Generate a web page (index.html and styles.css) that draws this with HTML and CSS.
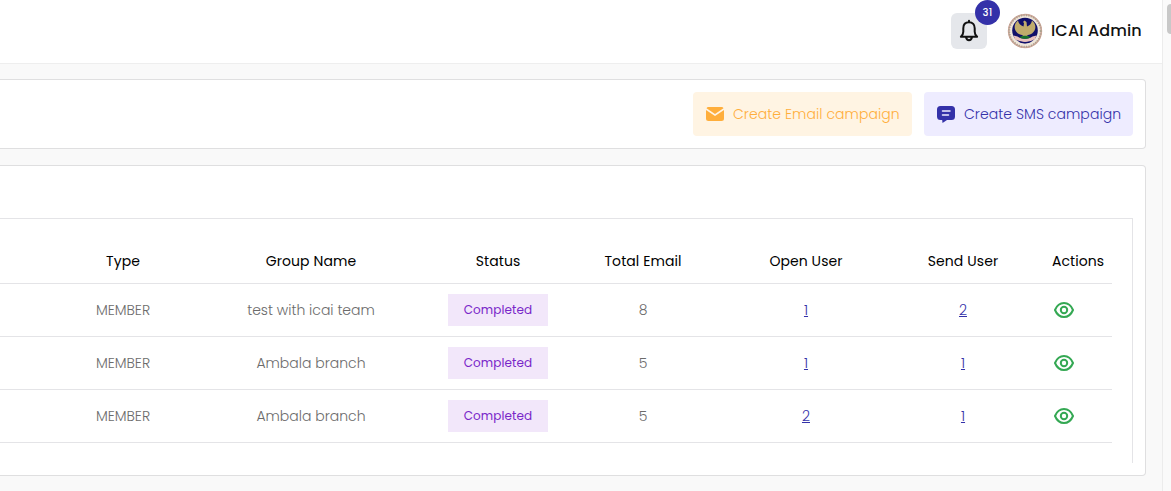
FILE: index.html
```
<!DOCTYPE html>
<html lang="en">
<head>
<meta charset="utf-8">
<title>Campaigns</title>
<link rel="stylesheet" href="styles.css">
</head>
<body>
<svg class="defs" aria-hidden="true">
  <symbol id="eye" viewBox="0 0 20 16"><path d="M1 8C3 3.200 6.200 1 10 1s7 2.200 9 7c-2 4.800-5.200 7-9 7S3 12.800 1 8Z"/><circle cx="10" cy="8" r="3.200"/></symbol>
</svg>
<div class="app">
  <div class="page">
    <header class="topbar">
      <button class="bell" aria-label="Notifications">
        <svg width="20" height="24" viewBox="0 0 20 24"><path d="M10 1.800v1.400M10 3.200c-3.700 0-5.700 2.600-5.700 6v3.500c0 2-.8 3.500-2.400 5.100h16.200c-1.600-1.600-2.400-3.100-2.400-5.100V9.200c0-3.400-2-6-5.700-6ZM7 18.300c.4 1.900 1.500 2.900 3 2.900s2.600-1 3-2.900"/></svg>
        <span class="count">31</span>
      </button>
      <svg class="avatar" width="36" height="36" viewBox="0 0 36 36">
        <circle cx="18" cy="18" r="17" fill="#efe6da"/>
        <circle cx="18" cy="18" r="16.300" fill="none" stroke="#cfa79b" stroke-width="1.800"/>
        <circle cx="18" cy="18" r="15.800" fill="none" stroke="#a8a18c" stroke-width="2" stroke-dasharray="1 1.500"/>
        <circle cx="18" cy="17.500" r="12.800" fill="#10106a"/>
        <path d="M11 7.500C6.500 11 6.500 17 11 20.500c2 1.300 4 1.700 5 1.700l-2 2.300h8l-2-2.300c1 0 3-.4 5-1.700 4.500-3.500 4.500-9.500 0-13-.5 3-2 5-5 6l-.5-4.500-2-1.500-1.500 1.500 1 1-.5 3.500c-3-1-5-3-5.500-6Z" fill="#c0ac6c"/>
        <path d="m6.500 22.500 4 1c4 3 11 3 15 0l4-1-1.500 3.500c-6 4-14 4-20 0Z" fill="#e9c2bd"/>
        <path d="M12.500 24.200c3-2 8-2 11 0-3 2.200-8 2.200-11 0Z" fill="#16712b"/>
        <path d="M11 28.200c4 1 10 1 14 0-4 3-10 3-14 0Z" fill="#10106a"/>
      </svg>
      <span class="user">ICAI Admin</span>
    </header>
    <main class="content">
      <section class="card toolbar">
        <button class="btn email">
          <svg width="18" height="14" viewBox="0 0 18 14"><path fill="currentColor" d="M2.500 0h13Q17 0 17.500 1.200L9 7 .5 1.200Q1 0 2.500 0ZM0 3l9 6 9-6v8.500q0 2.500-2.500 2.500h-13Q0 14 0 11.500Z"/></svg>
          <span>Create Email campaign</span>
        </button>
        <button class="btn sms">
          <svg width="18" height="17" viewBox="0 0 18 17"><path fill="currentColor" d="M3.500 0h11Q18 0 18 3.500v7q0 3.500-3.500 3.500H10l-4.500 3-.3-3H3.500Q0 14 0 10.500v-7Q0 0 3.500 0Z"/><path d="M5.500 5h7.500M5.500 9h6" stroke="#eeecff" stroke-width="1.500" stroke-linecap="round"/></svg>
          <span>Create SMS campaign</span>
        </button>
      </section>
      <section class="card listing">
        <div class="frame">
          <div class="row head">
            <span>Type</span><span>Group Name</span><span>Status</span><span>Total Email</span><span>Open User</span><span>Send User</span><span class="action">Actions</span>
          </div>
          <div class="row">
            <span>MEMBER</span><span>test with icai team</span><span><b class="badge">Completed</b></span><span>8</span><a href="#">1</a><a href="#">2</a><span class="action"><svg class="eye"><use href="#eye"/></svg></span>
          </div>
          <div class="row">
            <span>MEMBER</span><span>Ambala branch</span><span><b class="badge">Completed</b></span><span>5</span><a href="#">1</a><a href="#">1</a><span class="action"><svg class="eye"><use href="#eye"/></svg></span>
          </div>
          <div class="row">
            <span>MEMBER</span><span>Ambala branch</span><span><b class="badge">Completed</b></span><span>5</span><a href="#">2</a><a href="#">1</a><span class="action"><svg class="eye"><use href="#eye"/></svg></span>
          </div>
        </div>
      </section>
    </main>
  </div>
  <div class="scrollbar"><div class="thumb"></div></div>
</div>
</body>
</html>
```
FILE: styles.css
```
* { box-sizing: border-box; }
body { margin: 0; background: #f9f9f9; font: 300 14px/20px Poppins, Inter, "Liberation Sans", sans-serif; color: #6b6b6b; overflow: hidden; }
button { font: inherit; border: 0; }
.defs { display: none; }
.app { display: flex; width: 1171px; height: 491px; }
.page { width: 1163px; border-right: 1px solid #ececec; }
.topbar { height: 64px; background: #fff; border-bottom: 1px solid #eee; display: flex; align-items: center; justify-content: flex-end; padding: 0 20px 1px 0; }
.bell { position: relative; width: 36px; height: 36px; border-radius: 6px; background: #e5e7eb; display: flex; align-items: center; justify-content: center; padding: 0; margin-right: 20px; }
.bell svg { fill: none; stroke: #111; stroke-width: 2; stroke-linejoin: round; stroke-linecap: round; }
.count { position: absolute; left: 24px; top: -13px; width: 25px; height: 25px; border-radius: 50%; background: #3431a9; color: #fff; font-size: 10px; font-weight: 500; line-height: 25px; text-align: center; letter-spacing: .2px; }
.avatar { margin-right: 8px; }
.user { color: #111; font-size: 16px; font-weight: 500; width: 91px; white-space: nowrap; letter-spacing: .15px; }
.content { padding-top: 15px; }
.card { width: 1146px; background: #fff; border: 1px solid #dfdfe0; border-left: 0; border-radius: 0 4px 4px 0; }
.toolbar { height: 70px; display: flex; align-items: center; justify-content: flex-end; gap: 12px; padding-right: 12px; }
.btn { height: 44px; border-radius: 4px; display: flex; align-items: center; gap: 9px; padding: 0 0 0 13px; white-space: nowrap; text-align: left; letter-spacing: .06px; }
.email { width: 219px; background: #fff4e3; color: #ffae3b; }
.sms { width: 209px; background: #eeecff; color: #3431a9; }
.listing { height: 311px; margin-top: 16px; padding: 52px 12px 12px 0; }
.frame { height: 245px; border: 1px solid #e4e4e7; border-width: 1px 1px 0 0; padding: 20px 20px 0 0; }
.row { height: 53px; display: grid; grid-template-columns: 118px 258px 116px 174px 152px 162px 68px; padding-left: 64px; align-items: center; text-align: center; border-bottom: 1px solid #e4e4e7; }
.head { height: 45px; color: #000; font-weight: 400; letter-spacing: .08px; }
.row .action { text-align: left; padding-left: 8px; }
.row a { color: #3431a9; }
.badge { display: block; width: 100px; height: 32px; margin: 0 auto; background: #f2e7fa; color: #7926c9; font-size: 12px; font-weight: 400; line-height: 32px; letter-spacing: .1px; }
.eye { display: block; width: 20px; height: 16px; margin-left: 2px; fill: none; stroke: #34a853; stroke-width: 2; }
.scrollbar { width: 8px; background: #fafafa; padding: 4px 0 0 4px; overflow: hidden; }
.thumb { width: 8px; height: 30px; border-radius: 4px; background: #c8c8c8; }
```
